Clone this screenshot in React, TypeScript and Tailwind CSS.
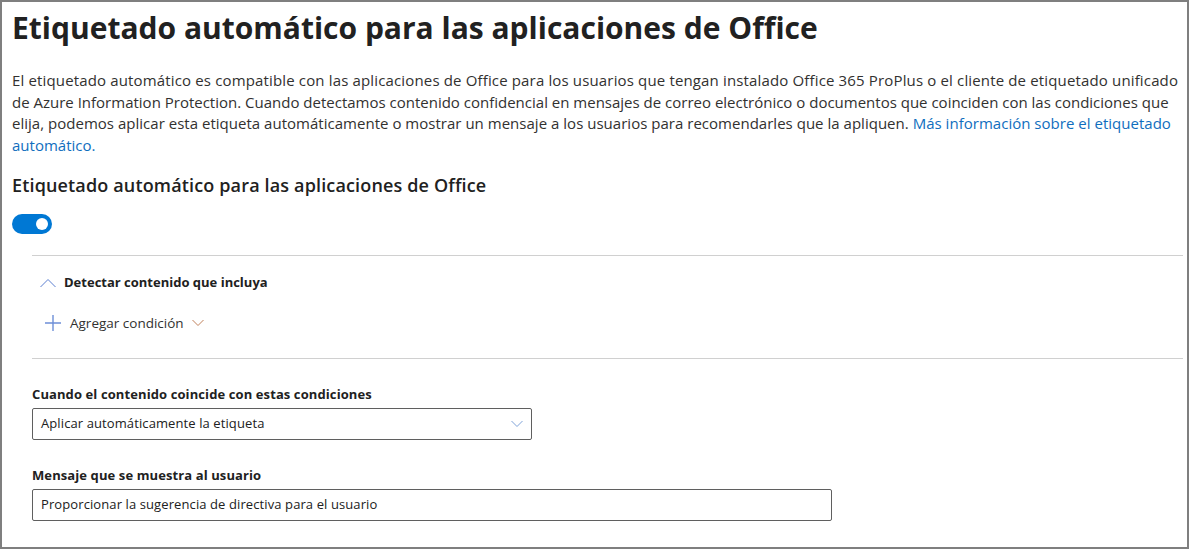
import React from "react";

const font = { fontFamily: '"Segoe UI", "Open Sans", "Noto Sans", sans-serif' };

function ChevronDown({ className }: { className?: string }) {
  return (
    <svg width="12" height="8" viewBox="0 0 12 8" className={className} fill="none">
      <path d="M0.5 1 L6 6.5 L11.5 1" stroke="currentColor" strokeWidth="1" />
    </svg>
  );
}

export default function App() {
  return (
    <div className="w-[1189px] h-[549px] bg-white overflow-hidden" style={font}>
      <div className="w-full h-full border-2 border-[#7f7f7f] box-border pl-[10px] pr-[4px] text-[#212121]">
        <h1 className="text-[30px] font-bold leading-[40px] mt-[6px] text-[#212121]">
          Etiquetado automático para las aplicaciones de Office
        </h1>
        <p className="mt-[22px] text-[15px] leading-[21.7px] text-[#323130]">
          <span className="block whitespace-nowrap tracking-[0.15px]">El etiquetado automático es compatible con las aplicaciones de Office para los usuarios que tengan instalado Office 365 ProPlus o el cliente de etiquetado unificado</span>
          <span className="block whitespace-nowrap tracking-[0px]">de Azure Information Protection. Cuando detectamos contenido confidencial en mensajes de correo electrónico o documentos que coinciden con las condiciones que</span>
          <span className="block whitespace-nowrap tracking-[0.02px]">elija, podemos aplicar esta etiqueta automáticamente o mostrar un mensaje a los usuarios para recomendarles que la apliquen. <span className="text-[#106ebe]">Más información sobre el etiquetado</span></span>
          <span className="block whitespace-nowrap text-[#106ebe]">automático.</span>
        </p>
        <h2 className="mt-[16px] text-[18px] font-semibold leading-[24px] tracking-[0.15px] text-[#212121]">
          Etiquetado automático para las aplicaciones de Office
        </h2>
        <div className="mt-[17px] w-[40px] h-[20px] rounded-full bg-[#0078d4] flex items-center justify-end pr-[4px]">
          <div className="w-[12px] h-[12px] rounded-full bg-white" />
        </div>
        <div className="ml-[20px] mt-[21px] border-t border-[#d0d0d0]">
          <div className="flex items-center mt-[17px] h-[20px] pl-[8px]">
            <svg width="16" height="10" viewBox="0 0 16 10" fill="none" className="text-[#5a7fd0]">
              <path d="M0.5 9 L8 1.5 L15.5 9" stroke="currentColor" strokeWidth="1" />
            </svg>
            <span className="ml-[8px] text-[13px] font-bold text-[#212121]">Detectar contenido que incluya</span>
          </div>
          <div className="flex items-center mt-[20px] h-[20px] pl-[13px]">
            <svg width="16" height="16" viewBox="0 0 16 16" fill="none">
              <path d="M8 0 V16 M0 8 H16" stroke="#6d8fd8" strokeWidth="1.4" />
            </svg>
            <span className="ml-[9px] text-[13.5px] text-[#323130]">Agregar condición</span>
            <ChevronDown className="ml-[8px] text-[#c0805a]" />
          </div>
          <div className="mt-[25px] border-t border-[#d0d0d0]" />
          <div className="mt-[26px] text-[13px] font-bold leading-[18px] tracking-[0.1px] text-[#212121]">
            Cuando el contenido coincide con estas condiciones
          </div>
          <div className="mt-[5px] w-[500px] h-[32px] border border-[#5f5f5f] rounded-[2px] flex items-center justify-between pl-[8px] pr-[8px]">
            <span className="text-[13px] tracking-[0.1px] text-[#212121]">Aplicar automáticamente la etiqueta</span>
            <ChevronDown className="text-[#7ea2d8]" />
          </div>
          <div className="mt-[26px] text-[13px] font-bold leading-[18px] tracking-[0.1px] text-[#212121]">
            Mensaje que se muestra al usuario
          </div>
          <div className="mt-[5px] w-[800px] h-[32px] border border-[#5f5f5f] rounded-[2px] flex items-center pl-[8px]">
            <span className="text-[13px] tracking-[0.1px] text-[#212121]">Proporcionar la sugerencia de directiva para el usuario</span>
          </div>
        </div>
      </div>
    </div>
  );
}
